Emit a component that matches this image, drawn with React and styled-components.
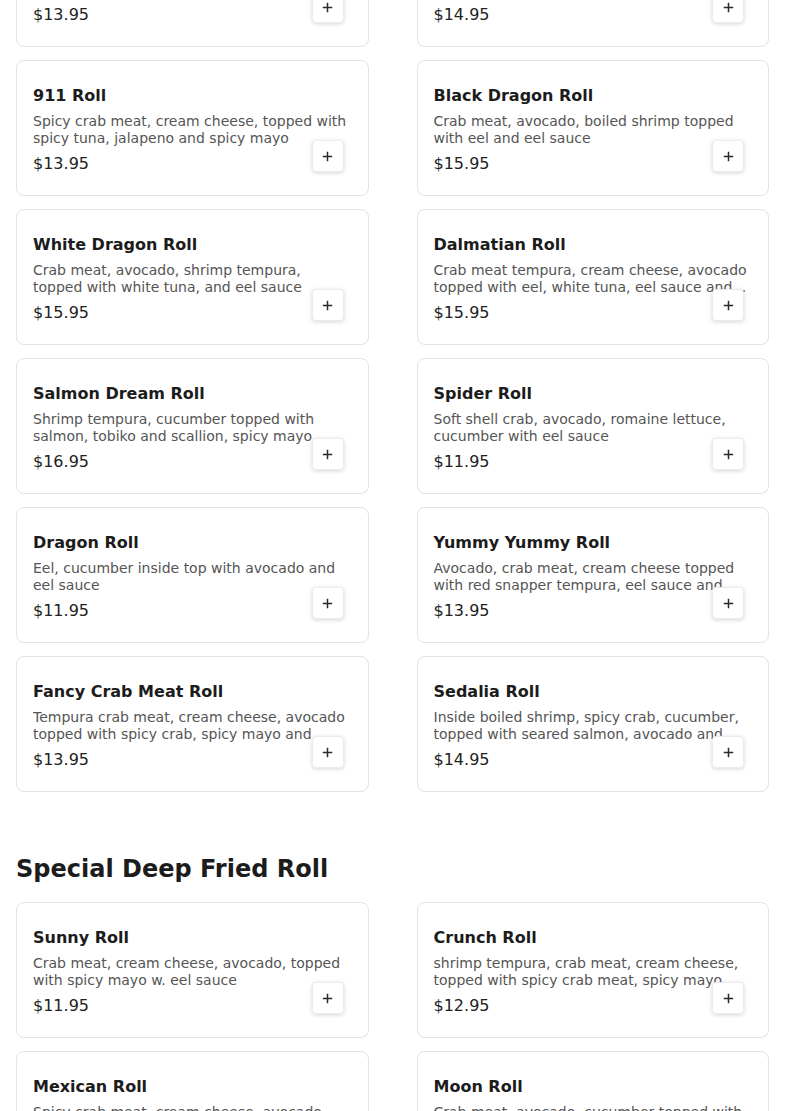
import React from "react";
import styled, { createGlobalStyle } from "styled-components";

const GlobalStyle = createGlobalStyle`
  html, body { margin: 0; padding: 0; background: #ffffff; }
  body { font-family: "DejaVu Sans", "Noto Sans", sans-serif; color: #1c1c1c; }
  * { box-sizing: border-box; }
`;

const Page = styled.div`
  padding: 0 16px 40px;
  margin-top: -89px;
`;

const Section = styled.section`
  & + & { margin-top: 63px; }
`;

const SectionTitle = styled.h2`
  margin: 0 0 18px;
  font-size: 24px;
  line-height: 29px;
  font-weight: 700;
  color: #1c1c1c;
`;

const Grid = styled.div`
  display: grid;
  grid-template-columns: 1fr 1fr;
  column-gap: 48px;
  row-gap: 13px;
`;

const Card = styled.article`
  position: relative;
  border: 1px solid #e3e3e3;
  border-radius: 8px;
  background: #fff;
  padding: 23px 16px 19px;
  display: flex;
  flex-direction: column;
`;

const Name = styled.h3`
  margin: 0;
  font-size: 16px;
  line-height: 24px;
  font-weight: 700;
  color: #1c1c1c;
`;

const Desc = styled.p`
  margin: 5px 0 0;
  font-size: 14px;
  line-height: 17px;
  height: 34px;
  color: #555555;
  display: -webkit-box;
  -webkit-line-clamp: 2;
  -webkit-box-orient: vertical;
  overflow: hidden;
`;

const Price = styled.div`
  margin-top: 5px;
  font-size: 16px;
  line-height: 24px;
  color: #222222;
`;

const AddButton = styled.button`
  position: absolute;
  right: 24px;
  bottom: 23px;
  width: 32px;
  height: 32px;
  padding: 0;
  border: 1px solid #ececec;
  border-radius: 4px;
  background: #ffffff;
  box-shadow: 0 1px 4px rgba(0, 0, 0, 0.16);
  display: flex;
  align-items: center;
  justify-content: center;
  cursor: pointer;
  color: #2a2a2a;
`;

const PlusIcon = () => (
  <svg width="11" height="11" viewBox="0 0 11 11" aria-hidden="true">
    <path d="M5.5 0.8v9.4M0.8 5.5h9.4" stroke="currentColor" strokeWidth="1.5" fill="none" />
  </svg>
);

const MenuItem = ({ name, desc, price }) => (
  <Card>
    <Name>{name}</Name>
    <Desc>{desc}</Desc>
    <Price>{price}</Price>
    <AddButton aria-label={`Add ${name}`}>
      <PlusIcon />
    </AddButton>
  </Card>
);

const specialRolls = [
  { name: "Rainbow Roll", desc: "Crab meat, avocado, cucumber topped with assorted fish", price: "$13.95" },
  { name: "Las Vegas Roll", desc: "Salmon, cream cheese, avocado, deep fried with eel sauce", price: "$14.95" },
  { name: "911 Roll", desc: "Spicy crab meat, cream cheese, topped with spicy tuna, jalapeno and spicy mayo", price: "$13.95" },
  { name: "Black Dragon Roll", desc: "Crab meat, avocado, boiled shrimp topped with eel and eel sauce", price: "$15.95" },
  { name: "White Dragon Roll", desc: "Crab meat, avocado, shrimp tempura, topped with white tuna, and eel sauce", price: "$15.95" },
  { name: "Dalmatian Roll", desc: "Crab meat tempura, cream cheese, avocado topped with eel, white tuna, eel sauce and spicy mayo", price: "$15.95" },
  { name: "Salmon Dream Roll", desc: "Shrimp tempura, cucumber topped with salmon, tobiko and scallion, spicy mayo", price: "$16.95" },
  { name: "Spider Roll", desc: "Soft shell crab, avocado, romaine lettuce, cucumber with eel sauce", price: "$11.95" },
  { name: "Dragon Roll", desc: "Eel, cucumber inside top with avocado and eel sauce", price: "$11.95" },
  { name: "Yummy Yummy Roll", desc: "Avocado, crab meat, cream cheese topped with red snapper tempura, eel sauce and spicy mayo", price: "$13.95" },
  { name: "Fancy Crab Meat Roll", desc: "Tempura crab meat, cream cheese, avocado topped with spicy crab, spicy mayo and crunchy tempura flakes", price: "$13.95" },
  { name: "Sedalia Roll", desc: "Inside boiled shrimp, spicy crab, cucumber, topped with seared salmon, avocado and masago", price: "$14.95" },
];

const deepFried = [
  { name: "Sunny Roll", desc: "Crab meat, cream cheese, avocado, topped with spicy mayo w. eel sauce", price: "$11.95" },
  { name: "Crunch Roll", desc: "shrimp tempura, crab meat, cream cheese, topped with spicy crab meat, spicy mayo and eel sauce", price: "$12.95" },
  { name: "Mexican Roll", desc: "Spicy crab meat, cream cheese, avocado, jalapeno, deep fried with spicy mayo and eel sauce", price: "$12.95" },
  { name: "Moon Roll", desc: "Crab meat, avocado, cucumber topped with spicy tuna, deep fried with eel sauce", price: "$12.95" },
];

export default function App() {
  return (
    <>
      <GlobalStyle />
      <Page>
        <Section>
          <Grid>
            {specialRolls.map((item) => (
              <MenuItem key={item.name} {...item} />
            ))}
          </Grid>
        </Section>
        <Section>
          <SectionTitle>Special Deep Fried Roll</SectionTitle>
          <Grid>
            {deepFried.map((item) => (
              <MenuItem key={item.name} {...item} />
            ))}
          </Grid>
        </Section>
      </Page>
    </>
  );
}
